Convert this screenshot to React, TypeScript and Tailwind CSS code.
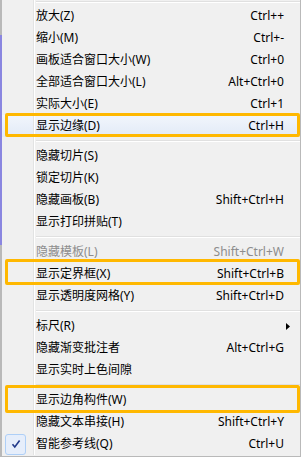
import React from "react";

type Item =
  | { sep: true }
  | {
      sep?: false;
      label: string;
      shortcut?: string;
      disabled?: boolean;
      submenu?: boolean;
      checked?: boolean;
      hover?: boolean;
    };

const items: Item[] = [
  { label: "放大(Z)", shortcut: "Ctrl++" },
  { label: "缩小(M)", shortcut: "Ctrl+-" },
  { label: "画板适合窗口大小(W)", shortcut: "Ctrl+0" },
  { label: "全部适合窗口大小(L)", shortcut: "Alt+Ctrl+0" },
  { label: "实际大小(E)", shortcut: "Ctrl+1" },
  { label: "显示边缘(D)", shortcut: "Ctrl+H", hover: true },
  { sep: true },
  { label: "隐藏切片(S)" },
  { label: "锁定切片(K)" },
  { label: "隐藏画板(B)", shortcut: "Shift+Ctrl+H" },
  { label: "显示打印拼贴(T)" },
  { sep: true },
  { label: "隐藏模板(L)", shortcut: "Shift+Ctrl+W", disabled: true },
  { label: "显示定界框(X)", shortcut: "Shift+Ctrl+B" },
  { label: "显示透明度网格(Y)", shortcut: "Shift+Ctrl+D" },
  { sep: true },
  { label: "标尺(R)", submenu: true },
  { label: "隐藏渐变批注者", shortcut: "Alt+Ctrl+G" },
  { label: "显示实时上色间隙" },
  { sep: true },
  { label: "显示边角构件(W)" },
  { label: "隐藏文本串接(H)", shortcut: "Shift+Ctrl+Y" },
  { label: "智能参考线(Q)", shortcut: "Ctrl+U", checked: true },
];

function Gutter({ children }: { children?: React.ReactNode }) {
  return (
    <div className="flex w-[33px] shrink-0 self-stretch">
      <div className="flex w-[31px] items-center justify-start pl-[3px]">
        {children}
      </div>
      <div className="w-px bg-[#e2e3e3]" />
      <div className="w-px bg-white" />
    </div>
  );
}

export default function App() {
  return (
    <div
      className="relative h-[461px] w-[304px] overflow-hidden bg-white text-[12px] text-black"
      style={{ fontFamily: '"Noto Sans", "Noto Sans CJK SC", sans-serif' }}
    >
      <div className="flex h-[457px] w-[301px] flex-col border-b border-l-2 border-r border-[#b9b9b9] bg-[#f0f0f0]">
        {/* top separator, cropped */}
        <div className="flex h-[5px]">
          <Gutter />
          <div className="flex flex-1 flex-col pl-[1px] pt-[1px]">
            <div className="h-px bg-[#e0e0e0]" />
            <div className="h-px bg-white" />
          </div>
        </div>
        {items.map((item, i) => {
          if (item.sep) {
            return (
              <div key={i} className="flex h-[8px]">
                <Gutter />
                <div className="flex flex-1 flex-col justify-center pl-[1px]">
                  <div className="h-px bg-[#e0e0e0]" />
                  <div className="h-px bg-white" />
                </div>
              </div>
            );
          }
          return (
            <div
              key={i}
              className={`flex h-[22px] items-center ${
                item.hover
                  ? "bg-[linear-gradient(to_bottom,#f2f6fc,#e1eaf7)]"
                  : ""
              }`}
            >
              <Gutter>
                {item.checked && (
                  <div className="flex h-[21px] w-[21px] items-center justify-center rounded-[3px] border border-[#aecff7] bg-[#e6eefb]">
                    <svg width="10" height="10" viewBox="0 0 10 10">
                      <path
                        d="M1.5 5.2 L3.8 8 L8.6 1.6"
                        fill="none"
                        stroke="#21398a"
                        strokeWidth="1.6"
                      />
                    </svg>
                  </div>
                )}
              </Gutter>
              <div
                className={`flex flex-1 items-center pl-[1px] pr-[16px] ${
                  item.disabled ? "text-[#8d8d8d]" : "text-black"
                }`}
              >
                <span className="flex-1 whitespace-nowrap">{item.label}</span>
                {item.shortcut && (
                  <span className="whitespace-nowrap">{item.shortcut}</span>
                )}
                {item.submenu && (
                  <svg width="4" height="7" viewBox="0 0 4 7" className="mr-[-6px]">
                    <path d="M0 0 L4 3.5 L0 7 Z" fill="#000" />
                  </svg>
                )}
              </div>
            </div>
          );
        })}
      </div>

      {/* purple strip of window behind */}
      <div className="absolute left-0 top-[35px] h-[210px] w-[2px] bg-[#8a86e0]" />

      {/* annotation boxes */}
      <div className="absolute left-[5px] top-[113px] h-[24px] w-[295px] rounded-[2px] border-[3px] border-[#ffb800]" />
      <div className="absolute left-[5px] top-[259px] h-[26px] w-[295px] rounded-[2px] border-[3px] border-[#ffb800]" />
      <div className="absolute left-[5px] top-[385px] h-[28px] w-[295px] rounded-[2px] border-[3px] border-[#ffb800]" />
    </div>
  );
}
